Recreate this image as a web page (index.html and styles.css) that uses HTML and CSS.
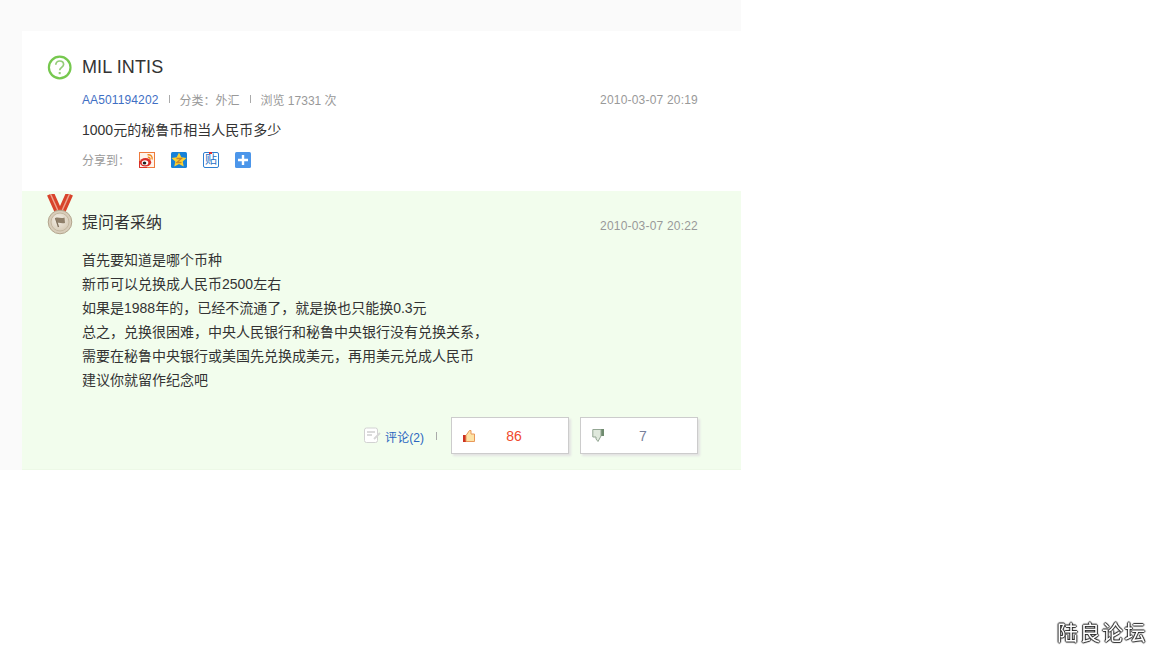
FILE: index.html
```html
<!DOCTYPE html>
<html lang="zh-CN">
<head>
    <meta charset="UTF-8">
    <title>陆良论坛</title>
    <link rel="stylesheet" href="styles.css">
</head>
<body>
    <div class="wrap">
        <div class="question">
            <div class="q-title">
                <svg class="q-icon" width="25" height="25" viewBox="0 0 25 25">
                    <circle cx="12.7" cy="12.5" r="10.800" fill="#fff" stroke="#76c84f" stroke-width="2.2"/>
                    <path d="M8.800 9.800c0-2.400 1.700-3.800 3.900-3.800s3.900 1.400 3.900 3.400c0 2.800-3.900 3-3.900 5.800" fill="none" stroke="#93cc78" stroke-width="1.700"/>
                    <rect x="11.700" y="17" width="2" height="2.200" fill="#93cc78"/>
                </svg>
                <h1>MIL INTIS</h1>
            </div>
            <div class="meta">
                <a class="qid" href="#">AA501194202</a>
                <span class="sep"></span>
                <span>分类：外汇</span>
                <span class="sep"></span>
                <span>浏览 17331 次</span>
                <span class="date">2010-03-07 20:19</span>
            </div>
            <p class="q-text">1000元的秘鲁币相当人民币多少</p>
            <div class="share">
                <span class="share-label">分享到：</span>
                <svg class="share-icon" width="16" height="16" viewBox="0 0 16 16">
                    <rect x=".5" y=".5" width="15" height="15" fill="#fff3ea" stroke="#ee7a3c"/>
                    <path d="M.5 9v6.500H8" fill="none" stroke="#d9302a"/>
                    <ellipse cx="6.500" cy="10.300" rx="5.700" ry="4.300" fill="#d9302a"/>
                    <ellipse cx="6" cy="10.800" rx="3.300" ry="2.500" fill="#fff"/>
                    <ellipse cx="5.500" cy="11" rx="1.800" ry="1.500" fill="#222"/>
                    <path d="M8.500 2.800c3-.6 5.200 1.600 4.600 4.700M8.800 5.300c1.500-.3 2.500.8 2.200 2.200" fill="none" stroke="#f08a22" stroke-width="1.400"/>
                </svg>
                <svg class="share-icon" width="16" height="16" viewBox="0 0 16 16">
                    <rect width="16" height="16" rx="1.500" fill="#1781d8"/>
                    <path d="M8 .5l2.300 4.800 5.200.6-3.800 3.500 1 5.100L8 12l-4.700 2.500 1-5.100L.5 5.900l5.200-.6z" fill="#fdd22f"/>
                    <path d="M5.500 6.500h5L5.800 10.500h4.700" fill="none" stroke="#c8862a" stroke-width="1.300"/>
                </svg>
                <span class="tieba">贴</span>
                <svg class="share-icon" width="16" height="16" viewBox="0 0 16 16">
                    <rect width="16" height="16" rx="1.500" fill="#4c96ea"/>
                    <path d="M8 3v10M3 8h10" stroke="#fff" stroke-width="2.400"/>
                </svg>
            </div>
        </div>
        <div class="answer">
            <svg class="medal" width="28" height="42" viewBox="0 0 28 42">
                <defs>
                    <radialGradient id="medal-face" cx="40%" cy="35%" r="70%">
                        <stop offset="0" stop-color="#f4efe6"/>
                        <stop offset="1" stop-color="#d6cab5"/>
                    </radialGradient>
                </defs>
                <path d="M4.500 0l8.500 19M23.500 0l-8.500 19" fill="none" stroke="#d8432b" stroke-width="7.500"/>
                <path d="M4.500 0l8.500 19M23.500 0l-8.500 19" fill="none" stroke="#eda58f" stroke-width="1.400"/>
                <circle cx="14" cy="28" r="11.800" fill="#d8cdba" stroke="#b3a58d"/>
                <circle cx="14" cy="28" r="9" fill="url(#medal-face)" stroke="#c4b7a0"/>
                <path d="M9.500 24l3 9" stroke="#7f6f5a" stroke-width="1.300"/>
                <path d="M9.500 24c2.500-1.500 5 1 9 -.5l.5 5.500c-3.500 1.200-6-1-7.700.3z" fill="#8f7f69"/>
            </svg>
            <div class="a-head">
                <h2>提问者采纳</h2>
                <span class="date">2010-03-07 20:22</span>
            </div>
            <div class="a-text">
                <p>首先要知道是哪个币种</p>
                <p>新币可以兑换成人民币2500左右</p>
                <p>如果是1988年的，已经不流通了，就是换也只能换0.3元</p>
                <p>总之，兑换很困难，中央人民银行和秘鲁中央银行没有兑换关系，</p>
                <p>需要在秘鲁中央银行或美国先兑换成美元，再用美元兑成人民币</p>
                <p>建议你就留作纪念吧</p>
            </div>
            <div class="actions">
                <svg class="comment-icon" width="18" height="17" viewBox="0 0 18 17">
                    <rect x=".5" y="1" width="13" height="14.500" rx="2" fill="#fff" stroke="#d2d2d2"/>
                    <path d="M3 5h8M3 8h5" stroke="#cfcfcf" stroke-width="1.500"/>
                    <path d="M10 12l6-6" stroke="#d6d6d6" stroke-width="1.800"/>
                </svg>
                <a class="comment" href="#">评论(2)</a>
                <span class="sep"></span>
                <div class="vote">
                    <svg width="12" height="13" viewBox="0 0 12 13">
                        <rect x="0" y="6" width="3" height="7" fill="#cc3222"/>
                        <path d="M3 6.500L6.500 1.500h1.500v3.500h3.500v7.500H3z" fill="#fde3a6" stroke="#e9985a"/>
                    </svg>
                    <span class="num-up">86</span>
                </div>
                <div class="vote">
                    <svg width="12" height="13" viewBox="0 0 12 13">
                        <rect x="9" y="0" width="3" height="7" fill="#6f8b6f"/>
                        <path d="M9 .5H.8v7.500h3.200v2L6 12.500 9 7z" fill="#dfe8dc" stroke="#93a693"/>
                    </svg>
                    <span class="num-down">7</span>
                </div>
            </div>
        </div>
    </div>
    <div class="mark">陆良论坛</div>
</body>
</html>
```

FILE: styles.css
```css
body {
    margin: 0;
    background-color: #fff;
    color: #333;
    font-family: "Liberation Sans", "Noto Sans CJK SC", sans-serif;
    font-size: 14px;
}

h1, h2, p {
    margin: 0;
    font-weight: normal;
}

a {
    text-decoration: none;
}

.wrap {
    width: 719px;
    height: 439px;
    padding: 31px 0 0 22px;
    background-color: #fafafa;
}

.question {
    height: 160px;
    padding: 24px 43px 0 25px;
    box-sizing: border-box;
    background-color: #fff;
}

.q-title {
    display: flex;
    align-items: center;
    height: 25px;
}

.q-icon {
    margin-right: 10px;
}

h1 {
    font-size: 18px;
    letter-spacing: .1px;
    color: #333;
}

.meta {
    display: flex;
    align-items: center;
    height: 16px;
    margin: 11px 0 0 35px;
    font-size: 12px;
    color: #999;
}

.qid {
    padding-top: 2px;
    letter-spacing: .12px;
    color: #3f6fc4;
}

.sep {
    width: 1px;
    height: 8px;
    margin: 0 10px;
    background-color: #aaa;
}

.date {
    margin-left: auto;
    padding-top: 2px;
    font-size: 12px;
    letter-spacing: .2px;
    color: #999;
}

.q-text {
    margin: 13px 0 0 35px;
    line-height: 20px;
}

.share {
    display: flex;
    align-items: center;
    height: 16px;
    margin: 12px 0 0 35px;
    font-size: 12px;
    color: #999;
}

.share-label {
    width: 57px;
    padding-bottom: 2px;
}

.share-icon {
    margin-right: 16px;
}

.tieba {
    position: relative;
    width: 14px;
    height: 14px;
    margin-right: 16px;
    border: 1px solid #2f7fd0;
    border-radius: 2px;
    background-color: #fff;
    color: #1f6fc4;
    font-size: 12px;
    line-height: 14px;
    text-align: center;
}

.tieba::before {
    content: "";
    position: absolute;
    left: 5px;
    top: -1px;
    width: 3px;
    height: 2px;
    background-color: #e03030;
}

.answer {
    position: relative;
    height: 279px;
    padding: 0 43px 0 60px;
    box-sizing: border-box;
    background-color: #f2fded;
    border-bottom: 1px solid #edf9e7;
}

.medal {
    position: absolute;
    left: 24px;
    top: 3px;
}

.a-head {
    display: flex;
    justify-content: space-between;
    align-items: flex-end;
    height: 43px;
}

h2 {
    font-size: 16px;
    line-height: 22px;
    color: #333;
}

.a-head .date {
    padding-top: 0;
    line-height: 16px;
}

.a-text {
    padding-top: 14px;
    line-height: 24px;
}

.actions {
    display: flex;
    align-items: center;
    justify-content: flex-end;
    margin-top: 25px;
}

.comment-icon {
    margin-right: 3px;
}

.comment {
    padding-top: 2px;
    font-size: 12px;
    letter-spacing: .05px;
    color: #2a66c0;
}

.actions .sep {
    margin: 0 14px 0 12px;
}

.vote {
    display: flex;
    align-items: center;
    width: 116px;
    height: 35px;
    margin-left: 11px;
    background-color: #fff;
    border: 1px solid #ccc;
    box-shadow: 2px 2px 2px #e3e3e3;
    font-size: 14px;
}

.actions .sep + .vote {
    margin-left: 0;
}

.vote svg {
    margin-left: 11px;
}

.vote span {
    width: 58px;
    margin-left: 10px;
    text-align: center;
}

.num-up {
    color: #f0492c;
}

.num-down {
    color: #77809a;
}

.mark {
    position: fixed;
    right: 5px;
    bottom: 2px;
    font-size: 21px;
    letter-spacing: 1.5px;
    color: #fff;
    text-shadow: 1px 0 1px #222, -1px 0 1px #222, 0 1px 1px #222, 0 -1px 1px #222;
}
```
